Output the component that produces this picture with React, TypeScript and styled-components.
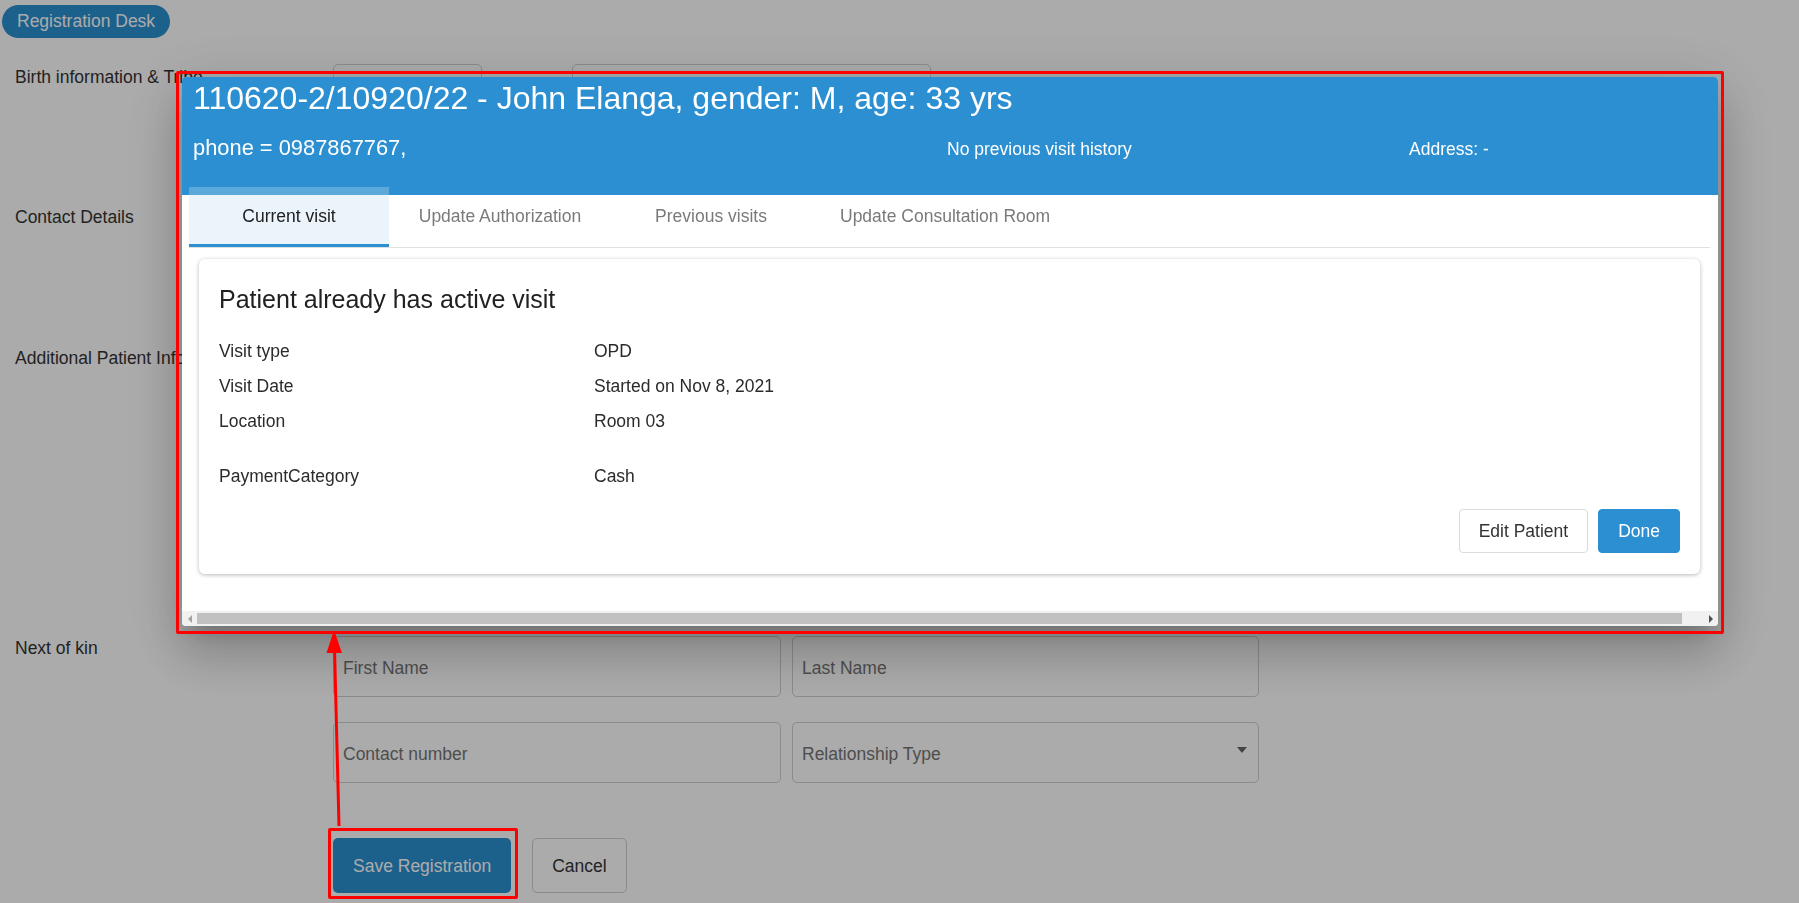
import React from 'react';
import styled, { createGlobalStyle } from 'styled-components';

const GlobalStyle = createGlobalStyle`
  html, body {
    margin: 0;
    padding: 0;
    background: #ffffff;
  }
  body {
    font-family: "Liberation Sans", Arial, sans-serif;
    font-size: 17.5px;
    color: #333333;
    overflow: hidden;
  }
  * {
    box-sizing: border-box;
  }
`;

const brandBlue = '#2b8fd1';

/* ---------- page behind the dialog ---------- */

const Page = styled.div`
  position: relative;
  width: 100vw;
  height: 100vh;
  padding: 5px 0 0 2px;
`;

const DeskPill = styled.div`
  display: inline-flex;
  align-items: center;
  height: 33px;
  padding: 0 15px;
  border-radius: 17px;
  background: ${brandBlue};
  color: #ffffff;
  font-size: 17.5px;
`;

const Form = styled.div`
  margin-top: 26px;
  display: flex;
  flex-direction: column;
`;

const Section = styled.div<{ $height?: number }>`
  display: grid;
  grid-template-columns: 331px 1fr;
  min-height: ${p => (p.$height ? `${p.$height}px` : 'auto')};
`;

const SectionLabel = styled.div`
  padding-left: 13px;
  padding-top: 1px;
  line-height: 25px;
  color: #333333;
  white-space: nowrap;
`;

const FieldLine = styled.div`
  display: flex;
  gap: 90px;
`;

const FieldGrid = styled.div`
  display: grid;
  grid-template-columns: 448px 467px;
  column-gap: 11px;
  row-gap: 25px;
  padding-top: 1px;
`;

const TextInput = styled.input<{ $width?: number }>`
  width: ${p => (p.$width ? `${p.$width}px` : '100%')};
  height: 61px;
  padding: 4px 9px 0;
  border: 1px solid #cfcfcf;
  border-radius: 5px;
  background: #ffffff;
  font-family: inherit;
  font-size: 17.5px;
  color: #333333;
  outline: none;

  &::placeholder {
    color: #757575;
  }
`;

const SelectBox = styled.div`
  position: relative;
  height: 61px;
  padding: 4px 9px 0;
  border: 1px solid #cfcfcf;
  border-radius: 5px;
  background: #ffffff;
  display: flex;
  align-items: center;
  color: #757575;

  &::after {
    content: '';
    position: absolute;
    right: 11px;
    top: 24px;
    border-left: 5.5px solid transparent;
    border-right: 5.5px solid transparent;
    border-top: 6px solid #666666;
  }
`;

const FormActions = styled.div`
  display: flex;
  gap: 21px;
  margin-top: 55px;
`;

const PrimaryButton = styled.button`
  height: 55px;
  padding: 2px 20px 0;
  border: none;
  border-radius: 5px;
  background: ${brandBlue};
  color: #ffffff;
  font-family: inherit;
  font-size: 17.5px;
`;

const GhostButton = styled.button`
  height: 55px;
  padding: 2px 19px 0;
  border: 1px solid #cfcfcf;
  border-radius: 5px;
  background: #ffffff;
  color: #333333;
  font-family: inherit;
  font-size: 17.5px;
`;

/* ---------- dialog ---------- */

const Backdrop = styled.div`
  position: fixed;
  inset: 0;
  background: rgba(0, 0, 0, 0.33);
`;

const Dialog = styled.div`
  position: fixed;
  left: 182px;
  top: 77px;
  width: 1536px;
  height: 549px;
  background: #ffffff;
  border-radius: 4px;
  overflow: hidden;
  display: flex;
  flex-direction: column;
  box-shadow: 0 14px 19px -9px rgba(0, 0, 0, 0.2),
    0 30px 48px 4px rgba(0, 0, 0, 0.14),
    0 11px 57px 10px rgba(0, 0, 0, 0.12);
`;

const DialogHeader = styled.div`
  background: ${brandBlue};
  color: #ffffff;
  padding: 2px 11px 34px;
`;

const PatientTitle = styled.h1`
  margin: 0;
  font-size: 32px;
  line-height: 38px;
  font-weight: 400;
`;

const InfoRow = styled.div`
  display: grid;
  grid-template-columns: 754px 462px 1fr;
  align-items: baseline;
  margin-top: 18px;
  font-size: 17.5px;
`;

const Phone = styled.span`
  font-size: 21.875px;
  line-height: 26px;
`;

const DialogBody = styled.div`
  flex: 1;
  padding: 0 8px 0 7px;
  display: flex;
  flex-direction: column;
`;

const TabBar = styled.div`
  position: relative;
  display: flex;
  gap: 11px;
  margin-top: -8px;
  border-bottom: 1px solid #e0e0e0;
`;

const Tab = styled.div<{ $active?: boolean }>`
  min-width: 200px;
  height: 60px;
  padding: 2px 18px 0;
  display: flex;
  align-items: center;
  justify-content: center;
  font-size: 17.5px;
  color: ${p => (p.$active ? '#212121' : '#7a7a7a')};
  border-bottom: 3px solid ${p => (p.$active ? brandBlue : 'transparent')};
  background: ${p =>
    p.$active
      ? 'linear-gradient(to bottom, #5ba8db 0, #5ba8db 8px, #ebf4fb 8px)'
      : 'transparent'};
`;

const VisitCard = styled.div`
  margin: 11px 10px 0;
  padding: 25px 20px 21px;
  background: #ffffff;
  border-radius: 6px;
  box-shadow: 0 1px 4px rgba(0, 0, 0, 0.28);
`;

const CardTitle = styled.h2`
  margin: 0 0 20px;
  font-size: 25px;
  line-height: 30px;
  font-weight: 400;
  color: #212121;
`;

const DetailRow = styled.div<{ $spaced?: boolean }>`
  display: grid;
  grid-template-columns: 375px 1fr;
  height: 35px;
  line-height: 35px;
  margin-top: ${p => (p.$spaced ? '20px' : '0')};
  color: #2b2b2b;
`;

const CardActions = styled.div`
  display: flex;
  justify-content: flex-end;
  gap: 10px;
  margin-top: 15px;
`;

const CardButton = styled.button<{ $primary?: boolean }>`
  height: 44px;
  padding: 0 19px;
  border-radius: 4px;
  border: 1px solid ${p => (p.$primary ? brandBlue : '#dcdcdc')};
  background: ${p => (p.$primary ? brandBlue : '#ffffff')};
  color: ${p => (p.$primary ? '#ffffff' : '#333333')};
  font-family: inherit;
  font-size: 17.5px;
`;

const ScrollTrack = styled.div`
  height: 15px;
  background: #f1f1f1;
  display: flex;
  align-items: center;
`;

const ScrollArrow = styled.div<{ $dir: 'left' | 'right'; $disabled?: boolean }>`
  width: 15px;
  height: 15px;
  display: flex;
  align-items: center;
  justify-content: center;

  &::before {
    content: '';
    border-top: 4px solid transparent;
    border-bottom: 4px solid transparent;
    ${p =>
      p.$dir === 'left'
        ? `border-right: 4px solid ${p.$disabled ? '#a3a3a3' : '#505050'};`
        : `border-left: 4px solid ${p.$disabled ? '#a3a3a3' : '#505050'};`}
  }
`;

const ScrollThumb = styled.div`
  width: 1485px;
  height: 11px;
  background: #c1c1c1;
`;

const ScrollRest = styled.div`
  flex: 1;
`;

/* ---------- red annotations drawn on the screenshot ---------- */

const Annotations = styled.div`
  position: fixed;
  inset: 0;
  pointer-events: none;
`;

const RedFrame = styled.div<{ $x: number; $y: number; $w: number; $h: number }>`
  position: absolute;
  left: ${p => p.$x}px;
  top: ${p => p.$y}px;
  width: ${p => p.$w}px;
  height: ${p => p.$h}px;
  border: 3px solid #ff0000;
  border-radius: 2px;
`;

const ArrowLayer = styled.svg`
  position: absolute;
  left: 0;
  top: 0;
`;

const visitDetails = [
  { label: 'Visit type', value: 'OPD' },
  { label: 'Visit Date', value: 'Started on Nov 8, 2021' },
  { label: 'Location', value: 'Room 03' },
  { label: 'PaymentCategory', value: 'Cash', spaced: true },
];

const tabs = ['Current visit', 'Update Authorization', 'Previous visits', 'Update Consultation Room'];

export default function App() {
  return (
    <>
      <GlobalStyle />
      <Page>
        <DeskPill>Registration Desk</DeskPill>

        <Form>
          <Section $height={140}>
            <SectionLabel>Birth information &amp; Tribe</SectionLabel>
            <FieldLine>
              <TextInput $width={149} placeholder="Date of birth" />
              <TextInput $width={359} placeholder="Tribe" />
            </FieldLine>
          </Section>

          <Section $height={141}>
            <SectionLabel>Contact Details</SectionLabel>
            <FieldGrid>
              <TextInput placeholder="Phone number" />
              <TextInput placeholder="Email" />
            </FieldGrid>
          </Section>

          <Section $height={290}>
            <SectionLabel>Additional Patient Info</SectionLabel>
            <FieldGrid>
              <TextInput placeholder="Occupation" />
              <TextInput placeholder="Religion" />
            </FieldGrid>
          </Section>

          <Section>
            <SectionLabel>Next of kin</SectionLabel>
            <div>
              <FieldGrid>
                <TextInput placeholder="First Name" />
                <TextInput placeholder="Last Name" />
                <TextInput placeholder="Contact number" />
                <SelectBox>Relationship Type</SelectBox>
              </FieldGrid>
              <FormActions>
                <PrimaryButton>Save Registration</PrimaryButton>
                <GhostButton>Cancel</GhostButton>
              </FormActions>
            </div>
          </Section>
        </Form>
      </Page>

      <Backdrop />

      <Dialog>
        <DialogHeader>
          <PatientTitle>110620-2/10920/22 - John Elanga, gender: M, age: 33 yrs</PatientTitle>
          <InfoRow>
            <Phone>phone = 0987867767,</Phone>
            <span>No previous visit history</span>
            <span>Address: -</span>
          </InfoRow>
        </DialogHeader>

        <DialogBody>
          <TabBar>
            {tabs.map((t, i) => (
              <Tab key={t} $active={i === 0}>
                {t}
              </Tab>
            ))}
          </TabBar>

          <VisitCard>
            <CardTitle>Patient already has active visit</CardTitle>
            {visitDetails.map(d => (
              <DetailRow key={d.label} $spaced={d.spaced}>
                <span>{d.label}</span>
                <span>{d.value}</span>
              </DetailRow>
            ))}
            <CardActions>
              <CardButton>Edit Patient</CardButton>
              <CardButton $primary>Done</CardButton>
            </CardActions>
          </VisitCard>
        </DialogBody>

        <ScrollTrack>
          <ScrollArrow $dir="left" $disabled />
          <ScrollThumb />
          <ScrollRest />
          <ScrollArrow $dir="right" />
        </ScrollTrack>
      </Dialog>

      <Annotations>
        <RedFrame $x={176} $y={71} $w={1548} $h={563} />
        <RedFrame $x={328} $y={828} $w={190} $h={71} />
        <ArrowLayer width="1799" height="903" viewBox="0 0 1799 903">
          <line x1="339" y1="826" x2="334.5" y2="648" stroke="#ff0000" strokeWidth="3" />
          <polygon points="334,630 326.5,653 342,653" fill="#ff0000" />
        </ArrowLayer>
      </Annotations>
    </>
  );
}
